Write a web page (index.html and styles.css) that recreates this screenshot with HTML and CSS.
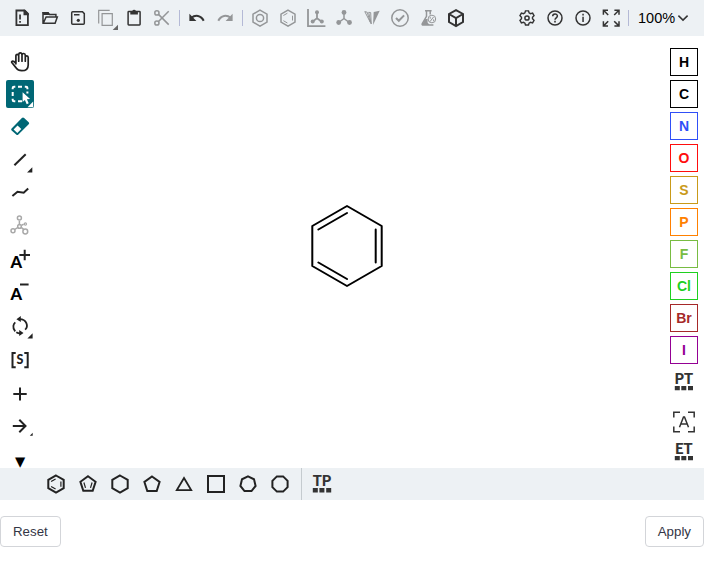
FILE: index.html
```html
<!DOCTYPE html>
<html lang="en">
<head>
<meta charset="utf-8">
<title>Structure editor</title>
<link rel="stylesheet" href="styles.css">
</head>
<body>
<div class="editor">
<header class="topbar">
  <div class="group">
    <svg class="icon" viewBox="0 0 28 28"><path class="l rot" d="M8.4 6.5h7.9l3.6 3.6v11.1H8.4z"/><path class="f" d="M15.5 5.7h1.7l3.6 3.6v2h-5.3zM11.2 10.5h1.7v5h-1.7zM11.2 17h1.7v1.8h-1.7z"/></svg>
    <svg class="icon" viewBox="0 0 28 28"><path class="l" d="M7 19.3V8.8h5l1.5 1.7h6.4v2M7.3 19.3l2.8-6.4h11.2l-2.2 6.4z"/><path class="f" d="M6.3 8h6l1.7 3H7.3z"/></svg>
    <svg class="icon" viewBox="0 0 28 28"><path class="l" d="M8.7 7.8h9.8l1.8 1.8v9.7q0 1-1 1H8.7q-1 0-1-1V8.8q0-1 1-1zM10 10.8h5.5"/><circle class="f" cx="14.3" cy="16.3" r="1.6"/></svg>
    <svg class="icon off" viewBox="0 0 28 28"><path class="l thin" d="M6.7 19.5V6.3h11M10.1 9.7h10.2v11.7H10.1z"/><path class="corner" d="M26 20.7v5.2h-5.3z"/></svg>
    <svg class="icon" viewBox="0 0 28 28"><rect class="l" x="8.1" y="7.6" width="12" height="13.4" rx=".7"/><path class="f" d="M10.3 7h2a1.9 1.9 0 0 1 3.6 0h2v3.6h-7.6z"/></svg>
    <svg class="icon off" viewBox="0 0 28 28"><circle class="l" cx="8.9" cy="8.9" r="2.1"/><circle class="l" cx="8.9" cy="19" r="2.1"/><path class="l" d="M10.5 10.4 20.7 20.6M10.5 17.5 20.7 7.2"/></svg>
    <i class="divider"></i>
    <svg class="icon" viewBox="0 0 28 28"><path class="l heavy" d="M8.4 13.8c3.8-3.2 9.6-2.7 12.3 3"/><path class="f" d="M6.4 9.8v7.1h7z"/></svg>
    <svg class="icon off" viewBox="0 0 28 28"><path class="l heavy" d="M19.6 13.8c-3.8-3.2-9.6-2.7-12.3 3"/><path class="f" d="M21.6 9.8v7.1h-7z"/></svg>
    <i class="divider"></i>
    <svg class="icon off" viewBox="0 0 28 28"><path class="l" d="m14 6.1 7 4v8l-7 4-7-4v-8z"/><circle class="l" cx="14" cy="14" r="3.6"/></svg>
    <svg class="icon off" viewBox="0 0 28 28"><path class="l" d="m14 6.1 7 4v8l-7 4-7-4v-8z"/><path class="l fine" d="m9.4 11.5 4-2.3M18.5 11.7v4.8M9.4 16.7l4 2.3"/></svg>
    <svg class="icon off" viewBox="0 0 28 28"><path class="l rot" d="M6 5v17.2h17.4M15 8.3v6l-4.2 3.1M15 14.3l4.5 3.1"/><circle class="f" cx="15" cy="8.2" r="2"/><circle class="f" cx="10.7" cy="17.6" r="2"/><circle class="f" cx="19.8" cy="17.6" r="2"/></svg>
    <svg class="icon off" viewBox="0 0 28 28"><path class="l" d="M14 8v6.5l-5.2 4M14 14.5l5.2 4"/><circle class="f" cx="14" cy="8.4" r="2.4"/><circle class="f" cx="8.7" cy="18.5" r="2.4"/><circle class="f" cx="19.5" cy="18.5" r="2.4"/></svg>
    <svg class="icon off" viewBox="0 0 28 28"><path class="f" d="m15 21 .7-13 6-1.2z"/><path class="l fine" d="m13.2 20-.5-11.4-2-.3zM12.4 18.5 6.8 7.6l2.4.6z"/></svg>
    <svg class="icon off" viewBox="0 0 28 28"><circle class="l" cx="14" cy="14" r="8.2"/><path class="l heavy" d="m10 14 2.8 2.8 5.3-5.4"/></svg>
    <svg class="icon off" viewBox="0 0 28 28"><path class="l" d="M11 6.8h6.6M12.5 7v5.3l-4.3 7.5q-.3 1.3 1 1.3h10.2M16.2 7v3.6"/><path class="f" d="m11.3 15-3.5 6h7.8l-2-2.5v-3.5z"/><circle class="l fine" cx="17.9" cy="15" r="3.8"/><path class="l fine" d="m19.5 13-3.5 4.6M16.2 12.8v1.9M19.6 15.4v1.8"/></svg>
    <svg class="icon" viewBox="0 0 28 28"><path class="l heavy" d="m14 6.1 7 3.9v8l-7 4-7-4v-8zM7 10l7 4 7-4M14 14v8"/></svg>
  </div>
  <div class="group end">
    <svg class="icon" viewBox="0 0 28 28"><path class="l" d="m12.4 7-.6 2.1-1.5.9-2.2-.6-1.5 2.7 1.6 1.6v1.6L6.6 17l1.5 2.6 2.2-.6 1.5.9.6 2h3.2l.6-2 1.5-.9 2.2.6 1.5-2.6-1.6-1.7v-1.6l1.6-1.6-1.5-2.7-2.2.6-1.5-.9-.6-2.1z" transform="translate(.7 .2) scale(.95)"/><circle class="l" cx="14" cy="14" r="2.1"/></svg>
    <svg class="icon" viewBox="0 0 28 28"><circle class="l" cx="14" cy="14" r="7"/><path class="l" d="M11.7 12.3c0-3 4.7-3 4.7-.2 0 1.8-2.4 1.8-2.4 3.7"/><path class="f" d="M13.2 16.8h1.6v1.6h-1.6z"/></svg>
    <svg class="icon" viewBox="0 0 28 28"><circle class="l" cx="14" cy="14" r="7"/><path class="f" d="M13.3 12.8h1.5v5.1h-1.5zM13.3 9.8h1.5v1.6h-1.5z"/></svg>
    <svg class="icon" viewBox="0 0 28 28"><path class="l" d="M6.4 10.8V6.2H11M17.4 6.2H22v4.6M6.4 17.3V22H11M17.4 22H22v-4.7M7 6.8l4.2 4.2M21.4 6.8 17.2 11M7 21.4l4.2-4.2M21.4 21.4l-4.2-4.2"/></svg>
    <i class="divider"></i>
    <button class="zoom"><span>100%</span><svg viewBox="0 0 10 8"><path class="l" d="m.4 1.6 4.6 4.5 4.6-4.5"/></svg></button>
  </div>
</header>
<main class="work">
  <nav class="tools">
    <svg class="icon" viewBox="0 0 28 28"><path class="l hand" d="M9.9 15.8V7.5q.1-1.1 1.4-1.1 1.3.1 1.3 1.1.1-2.6 1.7-2.6 1.6 0 1.7 2 .3-1.5 1.7-1.4 1.6.1 1.6 2v1.6q.3-1.3 1.6-1.2 1.3.1 1.3 1.5v7.5c0 3.4-2.2 5.8-6.4 5.8-2.7 0-4.4-.8-5.7-2.8l-4.3-5.4q-.5-.8.4-1.2 1.4-.5 3.7 2M12.7 7.2v6M16 7v6.2M19.3 8.5v4.7"/></svg>
    <div class="selected"><svg class="icon" viewBox="0 0 28 28"><path class="l heavy" d="M6.7 9.2V8q0-1.3 1.3-1.3h1.3M12 6.7h4M18.8 6.7h1.3q1.3 0 1.3 1.3v1.2M21.4 11.6v2M6.7 12v4M6.7 18.8V20q0 1.2 1.3 1.2h1.3M12 21.2h4"/><path class="f" d="M16.6 12.3v9.6l2.3-2 1.8 4.4 2-1-1.8-4 3.2-.3zM27.2 21.5v5.7h-5.7z"/></svg></div>
    <svg class="icon teal" viewBox="0 0 28 28"><path class="f" fill-rule="evenodd" d="M5.6 16.4 15.9 6q1.1-1 2.2 0l4.6 4.2q1 1 0 2L12.4 22.5q-1.1 1-2.2 0l-4.6-4.1q-1-1 0-2zM7.6 17.5l3.7 3.4 4-4-3.8-3.5z"/></svg>
    <svg class="icon gap" viewBox="0 0 28 28"><path class="l heavy" d="M8.4 19.2 19.7 8.3"/><path class="corner" d="M26.3 21.2v5.2h-5.2z"/></svg>
    <svg class="icon" viewBox="0 0 28 28"><path class="l heavy" d="m6.4 18 5.1-4.3 6.2 1.1 4.5-4.2"/></svg>
    <svg class="icon pale gap" viewBox="0 0 28 28"><path class="l" d="M13.4 8.7v4.6M12 15.3l-3.3 2.2M15.2 15.4l2.4 2M15.5 13.2l2.2-.9"/><circle class="l" cx="13.4" cy="6" r="2"/><circle class="l" cx="13.5" cy="14.4" r="1.8"/><circle class="l" cx="7" cy="18.8" r="2"/><circle class="l" cx="19.3" cy="19.5" r="2.4"/><circle class="l thin" cx="19.4" cy="12" r="1.1"/></svg>
    <svg class="icon gap" viewBox="0 0 28 28"><text class="letter" x="4.6" y="22.3">A</text><path class="l heavy" d="M13.4 9h10.6M18.7 3.8v10.4"/></svg>
    <svg class="icon" viewBox="0 0 28 28"><text class="letter" x="4.6" y="22.3">A</text><path class="l heavy" d="M14 6.5h8.6"/></svg>
    <svg class="icon gap" viewBox="0 0 28 28"><path class="l rot" d="M9.2 19.3c-3.4-4-1.5-7.6.1-8.9M13 7.1c8-.3 9.6 7.5 6.1 10.6M10.3 20.2q2.1 1.3 4.3 1.1"/><path class="f" d="m10.4 7.2 4.4-3.2v6.1zM17.5 20.9l-4.3 3v-5.8z"/><path class="corner" d="M26.6 21.3v5.2h-5.2z"/></svg>
    <svg class="icon gap" viewBox="0 0 28 28"><path class="l heavy" d="M9.7 6.9H6.5v14.3h3.2M18.3 6.9h3.4v14.3h-3.4"/><text class="sgroup" x="14" y="18.2" text-anchor="middle">S</text></svg>
    <svg class="icon gap" viewBox="0 0 28 28"><path class="l heavy" d="M7.3 14h13.4M14 7.5v13"/></svg>
    <svg class="icon" viewBox="0 0 28 28"><path class="l heavy" d="M6.8 14h12.3M13.3 7.8l6.2 6.2-6.2 6.2"/><path class="corner" d="M26.7 20.8v2.9h-2.9z"/></svg>
    <button class="more">▼</button>
  </nav>
  <section class="canvas">
    <svg class="molecule" viewBox="0 0 94 100"><path d="m47 10 34.7 20v40L47 90 12.3 70V30zM18.4 33.5 47 17M75.7 33.5v33M18.4 66.5 47 83"/></svg>
  </section>
  <aside class="atoms">
    <button class="atom h">H</button>
    <button class="atom c">C</button>
    <button class="atom n">N</button>
    <button class="atom o">O</button>
    <button class="atom s">S</button>
    <button class="atom p">P</button>
    <button class="atom fl">F</button>
    <button class="atom cl">Cl</button>
    <button class="atom br">Br</button>
    <button class="atom i">I</button>
    <svg class="icon" viewBox="0 0 28 28"><text class="table" x="13.8" y="15.6" text-anchor="middle">PT</text><path class="f" d="M4.8 17.9h5v4.4h-5zM11.3 17.9h5v4.4h-5zM18 17.9h5v4.4h-5z"/></svg>
    <svg class="icon any" viewBox="0 0 28 28"><path class="l" d="M3.8 9.5V4.2H10M18 4.2h6.2v5.3M3.8 18.5v5.3H10M18 23.8h6.2v-5.3M9.5 19.3 13.5 9h1l4 10.3M10.9 16h6.2"/></svg>
    <svg class="icon" viewBox="0 0 28 28"><text class="table" x="13.8" y="15.6" text-anchor="middle">ET</text><path class="f" d="M4.8 17.9h5v4.4h-5zM11.3 17.9h5v4.4h-5zM18 17.9h5v4.4h-5z"/></svg>
  </aside>
</main>
<footer class="templates">
  <div class="rings">
    <svg class="icon" viewBox="0 0 28 28"><path class="l heavy" d="m14 5.5 7.7 4.4v8.3L14 22.6l-7.7-4.4V9.9z"/><path class="l thin" d="m9.1 11.6 4.5-2.6M18.9 11.5v5.2M9.1 16.5l4.5 2.6"/></svg>
    <svg class="icon" viewBox="0 0 28 28"><path class="l heavy" d="m14 6.3 7.6 5.5-2.9 9H9.3l-2.9-9z"/><path class="l thin" d="m9.9 12.5 1.6 5.4M18.1 12.5l-1.6 5.4"/></svg>
    <svg class="icon" viewBox="0 0 28 28"><path class="l heavy" d="m14 5.5 7.7 4.4v8.3L14 22.6l-7.7-4.4V9.9z"/></svg>
    <svg class="icon" viewBox="0 0 28 28"><path class="l heavy" d="m14 6.5 7.6 5.5-2.9 9H9.3l-2.9-9z"/></svg>
    <svg class="icon" viewBox="0 0 28 28"><path class="l rot" d="m14 8 7.2 12.1H6.8z"/></svg>
    <svg class="icon" viewBox="0 0 28 28"><path class="l heavy" d="M6 6h16v16H6z"/></svg>
    <svg class="icon" viewBox="0 0 28 28"><path class="l heavy" d="m14 6.4 6 2.9 1.6 6.6-4.1 5.2h-7l-4.1-5.2L8 9.3z"/></svg>
    <svg class="icon" viewBox="0 0 28 28"><path class="l heavy" d="M10.9 6.4h6.2l4.5 4.5v6.2l-4.5 4.5h-6.2l-4.5-4.5v-6.2z"/></svg>
  </div>
  <svg class="icon" viewBox="0 0 28 28"><text class="table" x="14" y="15.8" text-anchor="middle">TP</text><path class="f" d="M4.8 18h5v4.4h-5zM11.4 18h5v4.4h-5zM18.2 18h5v4.4h-5z"/></svg>
</footer>
</div>
<div class="actions">
  <button class="action">Reset</button>
  <button class="action">Apply</button>
</div>
</body>
</html>
```
FILE: styles.css
```css
* { box-sizing: border-box; }
body { margin: 0; background: #fff; font-family: "Liberation Sans", Arial, sans-serif; color: #333; }
button { font: inherit; padding: 0; background: #fff; border: 0; }
.editor { height: 500px; display: flex; flex-direction: column; }
.topbar { height: 36px; background: #edf1f4; display: flex; justify-content: space-between; padding: 0 16px 0 8px; }
.group { display: flex; align-items: center; }
.icon { width: 28px; height: 28px; display: block; flex: none; color: #333; overflow: visible; }
.l { fill: none; stroke: currentColor; stroke-width: 1.5; }
.heavy { stroke-width: 2; }
.rot { stroke-width: 1.8; }
.thin { stroke-width: 1.2; }
.fine { stroke-width: 1; }
.hand { stroke-width: 1.7; stroke-linejoin: round; stroke-linecap: round; }
.f, .corner { fill: currentColor; }
.off { color: #949698; }
.off .corner { fill: #666; }
.divider { width: 1px; height: 16px; background: #b4b9d6; margin: 0 3px; }
.zoom { display: flex; align-items: center; gap: 3px; background: none; font-size: 14.5px; color: #000; margin-left: 9px; }
.zoom span { width: 37px; }
.zoom svg { width: 10px; height: 8px; color: #333; overflow: visible; }
.group.end .divider { margin-right: 0; }
.work { flex: 1; display: flex; min-height: 0; }
.tools { width: 40px; padding: 12px 6px 0; display: flex; flex-direction: column; gap: 4px; }
.tools .icon { color: #222; }
.tools .gap { margin-top: 2px; }
.tools .pale { color: #a9a9a9; }
.tools .teal { color: #006775; }
.tools .selected .icon { color: #fff; }
.selected { background: #006775; border-radius: 2px; width: 28px; height: 28px; }
.more { font: 13.3px/16px "DejaVu Sans", sans-serif; height: 16px; margin-top: 10px; color: #000; }
.letter { font: 900 16.5px Lato, sans-serif; fill: #000; }
.sgroup { font: 900 12.5px Lato, sans-serif; fill: #222; }
.table { font: 900 15px Lato, sans-serif; fill: #333; }
.canvas { flex: 1; display: flex; justify-content: center; padding-top: 160px; }
.molecule { width: 94px; height: 100px; margin-right: 10px; }
.molecule path { fill: none; stroke: #000; stroke-width: 2; stroke-linecap: round; stroke-linejoin: round; }
.atoms { width: 40px; padding: 12px 6px 0; display: flex; flex-direction: column; gap: 4px; }
.atom { width: 28px; height: 28px; flex: none; border: 1px solid currentColor; font-size: 14px; font-weight: bold; line-height: 26px; text-align: center; }
.h, .c { color: #000; }
.n { color: #304ff7; }
.o { color: #ff0d0d; }
.s { color: #c99a19; }
.p { color: #ff8000; }
.fl { color: #78bc42; }
.cl { color: #1fd01f; }
.br { color: #a62929; }
.i { color: #940094; }
.any { margin-top: 8px; }
.any + .icon { margin-top: -2px; }
.templates { height: 32px; background: #edf1f4; display: flex; align-items: center; padding-left: 42px; }
.rings { display: flex; align-items: center; gap: 4px; height: 32px; width: 260px; border-right: 1px solid #c5cbcf; margin-right: 6px; }
.rings .icon { color: #222; }
.actions { display: flex; justify-content: space-between; padding-top: 16px; }
.action { height: 31px; border: 1px solid #d3d5d9; border-radius: 4px; padding: 0 12px; font-size: 13.3px; color: #333545; }
```
